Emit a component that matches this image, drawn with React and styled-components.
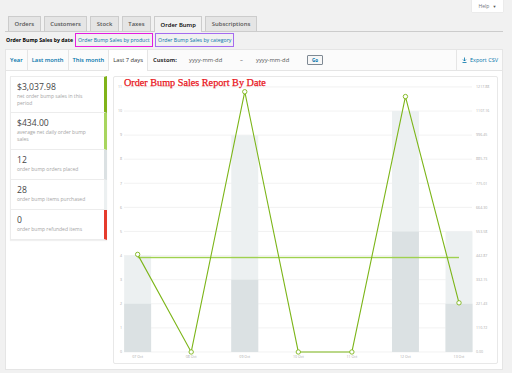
import React from "react";
import styled, { createGlobalStyle } from "styled-components";

const GlobalStyle = createGlobalStyle`
  html, body {
    margin: 0;
    padding: 0;
    background: #f1f1f1;
  }
  body {
    font-family: "Open Sans", "Liberation Sans", sans-serif;
    color: #444;
  }
`;

const tabs = ["Orders", "Customers", "Stock", "Taxes", "Order Bump", "Subscriptions"];
const ranges = ["Year", "Last month", "This month", "Last 7 days"];

const legend = [
  { amount: "$3,037.98", label: "net order bump sales in this period", color: "#80b31a", tall: true },
  { amount: "$434.00", label: "average net daily order bump sales", color: "#a8d55e", tall: true },
  { amount: "12", label: "order bump orders placed", color: "#dbe1e3" },
  { amount: "28", label: "order bump items purchased", color: "#ecf0f1" },
  { amount: "0", label: "order bump refunded items", color: "#e53b2c" },
];

// chart data, in grid units (0..11)
const days = ["07 Oct", "08 Oct", "09 Oct", "10 Oct", "11 Oct", "12 Oct", "13 Oct"];
const items = [4, 0, 9, 0, 0, 10, 5];
const orders = [2, 0, 3, 0, 0, 5, 2];
const sales = [4.05, 0, 10.8, 0, 0, 10.6, 2.04];
const average = 3.92;
const rightLabels = ["0.00", "110.72", "221.43", "332.15", "442.87", "553.58", "664.30", "775.01", "885.73", "996.45", "1107.16", "1217.88"];

const dayX = (i) => 137.7 + i * 53.7;
const valY = (v) => 352.7 - 24.16 * v;

const Page = styled.div`
  width: 512px;
  height: 373px;
  overflow: hidden;
`;

const HelpRow = styled.div`
  display: flex;
  justify-content: flex-end;
  padding-right: 9px;
`;

const HelpTab = styled.div`
  width: 31px;
  height: 12px;
  background: #fff;
  box-shadow: 0 0 1px rgba(0, 0, 0, 0.15);
  display: flex;
  align-items: center;
  justify-content: center;
  gap: 3px;
  font-size: 5px;
  color: #72777c;
`;

const Caret = styled.span`
  font-size: 4px;
  color: #555;
`;

const TabWrap = styled.div`
  display: flex;
  gap: 3px;
  margin: 4px 9px 0 5px;
  padding-left: 3px;
  border-bottom: 1px solid #ccc;
  height: 15px;
`;

const Tab = styled.div`
  box-sizing: border-box;
  padding: 0 5.5px;
  border: 1px solid #ccc;
  border-bottom: none;
  background: ${(p) => (p.$active ? "#f1f1f1" : "#e5e5e5")};
  color: ${(p) => (p.$active ? "#000" : "#555")};
  font-size: 5.9px;
  font-weight: 600;
  display: flex;
  align-items: center;
  margin-bottom: ${(p) => (p.$active ? "-1px" : "0")};
  height: ${(p) => (p.$active ? "16px" : "15px")};
`;

const SubNav = styled.div`
  display: flex;
  align-items: center;
  height: 15px;
  padding-left: 6px;
  font-size: 5.2px;
`;

const Current = styled.span`
  font-weight: 700;
  color: #000;
  margin-right: 2px;
`;

const SubLink = styled.span`
  color: #0073aa;
  border: 1.5px solid ${(p) => p.$ring};
  height: 14px;
  box-sizing: border-box;
  display: flex;
  align-items: center;
  padding: 0 2px;
  margin-right: 2.5px;
`;

const Box = styled.div`
  margin: 2px 9px 0 5px;
  height: 321px;
  box-sizing: border-box;
  border: 1px solid #e5e5e5;
  background: #fff;
  display: flex;
  flex-direction: column;
`;

const RangeBar = styled.div`
  display: flex;
  height: 21px;
  background: #fbfbfb;
  border-bottom: 1px solid #e5e5e5;
  font-size: 5.8px;
`;

const RangeItem = styled.div`
  display: flex;
  align-items: center;
  padding: 0 4px;
  border-right: 1px solid #e5e5e5;
  background: ${(p) => (p.$active ? "#fff" : "transparent")};
  color: ${(p) => (p.$active ? "#333" : "#0073aa")};
  font-weight: ${(p) => (p.$active ? 400 : 600)};
  margin-bottom: ${(p) => (p.$active ? "-1px" : "0")};
`;

const Custom = styled.div`
  display: flex;
  align-items: center;
  padding-left: 5px;
  flex: 1;
  color: #333;
`;

const CustomLabel = styled.span`
  font-weight: 700;
  width: 36px;
`;

const DateField = styled.span`
  color: #555;
  width: 51px;
`;

const Dash = styled.span`
  width: 16px;
`;

const GoButton = styled.span`
  width: 16px;
  height: 10px;
  box-sizing: border-box;
  border: 1px solid #7e8993;
  border-radius: 1px;
  background: #f7f7f7;
  color: #0073aa;
  font-weight: 700;
  font-size: 4.5px;
  display: flex;
  align-items: center;
  justify-content: center;
`;

const Export = styled.div`
  display: flex;
  align-items: center;
  gap: 3px;
  padding: 0 4px 0 5px;
  border-left: 1px solid #e5e5e5;
  color: #0073aa;
  font-size: 5.5px;
`;

const Body = styled.div`
  flex: 1;
  display: flex;
  gap: 6px;
  padding: 5px 4px 5px 4px;
`;

const Legend = styled.div`
  width: 97px;
  align-self: flex-start;
  box-shadow: 0 1px 1px rgba(0, 0, 0, 0.06);
`;

const Card = styled.div`
  box-sizing: border-box;
  height: ${(p) => (p.$tall ? "37px" : "30px")};
  padding: 5px 8px 0 6px;
  border: 1px solid #ececec;
  border-top: none;
  border-right: 3px solid ${(p) => p.$color};
  &:first-child {
    border-top: 1px solid #ececec;
  }
`;

const Amount = styled.div`
  font-size: 8.6px;
  line-height: 11px;
  color: #464646;
`;

const Label = styled.div`
  font-size: 5px;
  line-height: 7.5px;
  color: #a4a4a4;
`;

const ChartBox = styled.div`
  flex: 1;
  position: relative;
  border: 1px solid #e8e8e8;
  border-radius: 2px;
`;

const ChartTitle = styled.div`
  position: absolute;
  left: 10px;
  top: 0;
  font-family: "Liberation Serif", "DejaVu Serif", serif;
  font-size: 10.2px;
  color: #e8141b;
  -webkit-text-stroke: 0.25px #e8141b;
`;

const Plot = styled.svg`
  display: block;
  width: 100%;
  height: 100%;
  font-family: "Open Sans", "Liberation Sans", sans-serif;
`;

function Chart() {
  const grid = Array.from({ length: 12 }, (_, v) => v);
  const line = sales.map((v, i) => `${dayX(i)},${valY(v)}`).join(" ");
  return (
    <ChartBox>
      <Plot viewBox="114 77 384 287" preserveAspectRatio="none">
        {grid.map((v) => (
          <g key={v}>
            <line x1="124" x2="473" y1={valY(v)} y2={valY(v)} stroke="#efefef" strokeWidth="0.8" />
            <text x="122" y={valY(v) + 1.3} fontSize="3.6" fill="#aaa" textAnchor="end">{v}</text>
            <text x="477" y={valY(v) + 1.3} fontSize="3.6" fill="#aaa">{rightLabels[v]}</text>
          </g>
        ))}
        {days.map((d, i) => (
          <g key={d}>
            {items[i] > 0 && (
              <rect x={dayX(i) - 13.5} width="27" y={valY(items[i])} height={valY(0) - valY(items[i])} fill="#ecf0f1" />
            )}
            {orders[i] > 0 && (
              <rect x={dayX(i) - 13.5} width="27" y={valY(orders[i])} height={valY(0) - valY(orders[i])} fill="#dbe1e3" />
            )}
            <text x={dayX(i)} y="358.3" fontSize="3.6" fill="#aaa" textAnchor="middle">{d}</text>
          </g>
        ))}
        <rect x={dayX(0)} width={dayX(6) - dayX(0)} y={valY(average) - 0.7} height="1.4" fill="#9fd14f" />
        <polyline points={line} fill="none" stroke="#7cb518" strokeWidth="1.1" />
        {sales.map((v, i) => (
          <circle key={i} cx={dayX(i)} cy={valY(v)} r="2.2" fill="#fff" stroke="#7cb518" strokeWidth="0.9" />
        ))}
      </Plot>
      <ChartTitle>Order Bump Sales Report By Date</ChartTitle>
    </ChartBox>
  );
}

export default function App() {
  return (
    <Page>
      <GlobalStyle />
      <HelpRow>
        <HelpTab>
          Help <Caret>▼</Caret>
        </HelpTab>
      </HelpRow>
      <TabWrap>
        {tabs.map((t) => (
          <Tab key={t} $active={t === "Order Bump"}>{t}</Tab>
        ))}
      </TabWrap>
      <SubNav>
        <Current>Order Bump Sales by date</Current>
        <SubLink $ring="#e41ee0">Order Bump Sales by product</SubLink>
        <SubLink $ring="#a56cf0">Order Bump Sales by category</SubLink>
      </SubNav>
      <Box>
        <RangeBar>
          {ranges.map((r) => (
            <RangeItem key={r} $active={r === "Last 7 days"}>{r}</RangeItem>
          ))}
          <Custom>
            <CustomLabel>Custom:</CustomLabel>
            <DateField>yyyy-mm-dd</DateField>
            <Dash>–</Dash>
            <DateField>yyyy-mm-dd</DateField>
            <GoButton>Go</GoButton>
          </Custom>
          <Export>
            <svg width="5" height="6" viewBox="0 0 10 12">
              <path d="M5 1v7M2 5l3 3 3-3M1 11h8" fill="none" stroke="#0073aa" strokeWidth="1.6" />
            </svg>
            Export CSV
          </Export>
        </RangeBar>
        <Body>
          <Legend>
            {legend.map((l) => (
              <Card key={l.label} $color={l.color} $tall={l.tall}>
                <Amount>{l.amount}</Amount>
                <Label>{l.label}</Label>
              </Card>
            ))}
          </Legend>
          <Chart />
        </Body>
      </Box>
    </Page>
  );
}
